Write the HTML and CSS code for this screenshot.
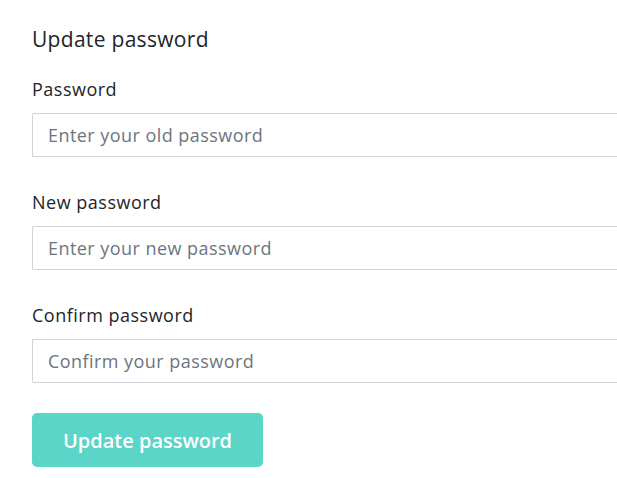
FILE: index.html
```html
<!DOCTYPE html>
<html>
<head>
    <title>Update password</title>
    <link rel="stylesheet" href="styles.css">
</head>
<body>
    <div class="password-card">
        <h3>Update password</h3>
        <form id="passwordForm" class="password-form">
            <div class="form-group">
                <label for="oldPassword">Password</label>
                <input type="password" id="oldPassword" placeholder="Enter your old password">
            </div>
            <div class="form-group">
                <label for="newPassword">New password</label>
                <input type="password" id="newPassword" placeholder="Enter your new password">
            </div>
            <div class="form-group">
                <label for="confirmPassword">Confirm password</label>
                <input type="password" id="confirmPassword" placeholder="Confirm your password">
            </div>
            <button type="submit">Update password</button>
        </form>
    </div>
</body>
</html>
```

FILE: styles.css
```css
body {
    font-family: 'Open Sans', sans-serif;
    background-color: #ffffff;
    color: #212529;
    margin: 0;
}

.password-card {
    padding: 25px 0 0 32px;
}

h3 {
    font-size: 21px;
    font-weight: 400;
    line-height: 28px;
    letter-spacing: 0.3px;
    margin: 0 0 24px;
}

.password-form {
    display: flex;
    flex-direction: column;
    align-items: flex-start;
    gap: 33px;
}

.form-group {
    display: flex;
    flex-direction: column;
    align-self: stretch;
}

label {
    font-size: 18px;
    line-height: 24px;
    letter-spacing: 0.5px;
    margin-bottom: 12px;
}

/* the field runs on past the right edge of the panel */
input[type="password"] {
    width: 100%;
    height: 44px;
    padding: 0 15px;
    border: 1px solid #ced4da;
    border-right: none;
    border-radius: 2px 0 0 2px;
    box-sizing: border-box;
    font-family: inherit;
    font-size: 18px;
    letter-spacing: 0.45px;
    color: #212529;
    outline: none;
}

input::placeholder {
    color: #6c757d;
}

button[type="submit"] {
    margin-top: -3px;
    width: 231px;
    height: 54px;
    background-color: #5ad5c8;
    color: #ffffff;
    border: none;
    border-radius: 5px;
    font-family: inherit;
    font-size: 20px;
    font-weight: 600;
    cursor: pointer;
}
```
